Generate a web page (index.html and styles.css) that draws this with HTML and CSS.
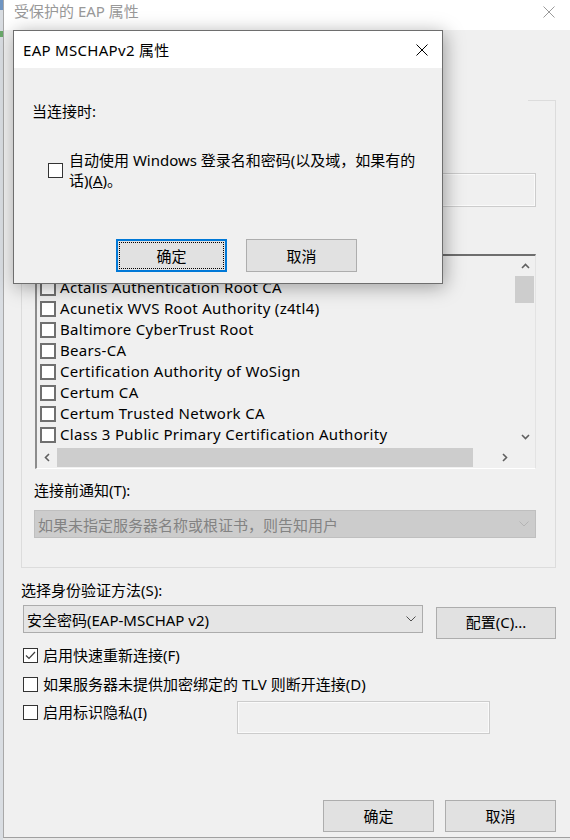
FILE: index.html
```html
<!DOCTYPE html>
<html lang="zh-CN">
  <head>
    <meta charset="UTF-8" />
    <title>受保护的 EAP 属性</title>
    <link rel="stylesheet" href="styles.css">
  </head>
  <body>
    <div class="desk">
      <!-- sliver of the desktop on the left -->
      <div class="edge">
        <div class="edge-blue"></div>
        <div class="edge-green"></div>
      </div>

      <!-- main window: 受保护的 EAP 属性 -->
      <div class="win">
        <div class="titlebar">
          <span class="title">受保护的 EAP 属性</span>
          <svg class="close" width="12" height="12" viewBox="0 0 12 12">
            <path d="M0.5 0.5L11.5 11.5M11.5 0.5L0.5 11.5" stroke="#9a9a9a" stroke-width="1" fill="none" />
          </svg>
        </div>

        <div class="content">
          <!-- the upper part of the group sits under the modal -->
          <div class="group">
            <div class="field servers"></div>

            <div class="list">
              <div class="list-main">
                <div class="rows">
                  <div class="item"><span class="ibox"></span></div>
                  <div class="item"><span class="ibox"></span>Actalis Authentication Root CA</div>
                  <div class="item"><span class="ibox"></span>Acunetix WVS Root Authority (z4tl4)</div>
                  <div class="item"><span class="ibox"></span>Baltimore CyberTrust Root</div>
                  <div class="item"><span class="ibox"></span>Bears-CA</div>
                  <div class="item"><span class="ibox"></span>Certification Authority of WoSign</div>
                  <div class="item"><span class="ibox"></span>Certum CA</div>
                  <div class="item"><span class="ibox"></span>Certum Trusted Network CA</div>
                  <div class="item"><span class="ibox"></span>Class 3 Public Primary Certification Authority</div>
                </div>
                <div class="vscroll">
                  <div class="sbtn">
                    <svg width="9" height="6" viewBox="0 0 9 6"><path d="M1 5L4.5 1.5L8 5" stroke="#606060" stroke-width="1.6" fill="none" /></svg>
                  </div>
                  <div class="vthumb"></div>
                  <div class="track"></div>
                  <div class="sbtn">
                    <svg width="9" height="6" viewBox="0 0 9 6"><path d="M1 1L4.5 4.5L8 1" stroke="#606060" stroke-width="1.6" fill="none" /></svg>
                  </div>
                </div>
              </div>
              <div class="list-foot">
                <div class="hscroll">
                  <div class="sbtn">
                    <svg width="6" height="9" viewBox="0 0 6 9"><path d="M5 1L1.5 4.5L5 8" stroke="#606060" stroke-width="1.6" fill="none" /></svg>
                  </div>
                  <div class="hthumb"></div>
                  <div class="track"></div>
                  <div class="sbtn">
                    <svg width="6" height="9" viewBox="0 0 6 9"><path d="M1 1L4.5 4.5L1 8" stroke="#606060" stroke-width="1.6" fill="none" /></svg>
                  </div>
                </div>
                <div class="corner"></div>
              </div>
            </div>

            <div class="label cap-t">连接前通知(T):</div>
            <div class="combo disabled">
              <span>如果未指定服务器名称或根证书，则告知用户</span>
              <svg width="10" height="6" viewBox="0 0 10 6"><path d="M0.5 0.5L5 5L9.5 0.5" stroke="#b4b4b4" stroke-width="1" fill="none" /></svg>
            </div>
          </div>

          <div class="label cap-s">选择身份验证方法(S):</div>
          <div class="method-row">
            <div class="combo method">
              <span>安全密码(EAP-MSCHAP v2)</span>
              <svg width="10" height="6" viewBox="0 0 10 6"><path d="M0.5 0.5L5 5L9.5 0.5" stroke="#505050" stroke-width="1" fill="none" /></svg>
            </div>
            <button class="btn config">配置(C)...</button>
          </div>

          <label class="check opt first">
            <span class="box">
              <svg width="13" height="13" viewBox="0 0 13 13"><path d="M2 6.5L5 9.5L11 3" stroke="#3c3c3c" stroke-width="1.2" fill="none" /></svg>
            </span>启用快速重新连接(F)
          </label>
          <label class="check opt"><span class="box"></span>如果服务器未提供加密绑定的 TLV 则断开连接(D)</label>
          <div class="privacy-row">
            <label class="check privacy"><span class="box"></span>启用标识隐私(I)</label>
            <div class="field identity"></div>
          </div>

          <div class="footer">
            <button class="btn">确定</button>
            <button class="btn">取消</button>
          </div>
        </div>
      </div>

      <!-- modal on top: EAP MSCHAPv2 属性 -->
      <div class="dialog">
        <div class="dlg-title">
          <span class="dlg-name">EAP MSCHAPv2 属性</span>
          <svg width="12" height="12" viewBox="0 0 12 12">
            <path d="M0.5 0.5L11.5 11.5M11.5 0.5L0.5 11.5" stroke="#000" stroke-width="1" fill="none" />
          </svg>
        </div>
        <div class="dlg-body">
          <div class="dlg-label">当连接时:</div>
          <label class="dlg-check">
            <span class="box"></span>
            <span class="dlg-text">自动使用 Windows 登录名和密码(以及域，如果有的<br>话)(<u>A</u>)。</span>
          </label>
          <div class="dlg-buttons">
            <button class="btn default">确定</button>
            <button class="btn">取消</button>
          </div>
        </div>
      </div>
    </div>
  </body>
</html>
```

FILE: styles.css
```css
/* General */
body {
  margin: 0;
  font-family: "Noto Sans", "Noto Sans CJK SC", sans-serif;
  font-size: 15px;
  color: #000;
  background: #f0f0f0;
}

.desk {
  position: relative;
  width: 570px;
  height: 840px;
  overflow: hidden;
  display: flex;
  background: #e8e8e8;
}

/* Desktop sliver */
.edge {
  width: 3px;
  background: #d9dde2;
}

.edge-blue {
  height: 10px;
  background: #6f95c2;
}

.edge-green {
  height: 6px;
  margin-top: 21px;
  background: #6aa86a;
}

/* Main window */
.win {
  flex: 1;
  height: 838px;
  box-sizing: border-box;
  border-left: 1px solid #a8a8a8;
  border-bottom: 1px solid #a0a0a0;
  background: #f0f0f0;
}

.titlebar {
  height: 30px;
  background: #fff;
  display: flex;
  align-items: center;
  justify-content: space-between;
  padding: 0 15px 0 10px;
}

.title {
  color: #999;
  line-height: 20px;
  margin-top: -8px;
}

.close {
  margin-top: -6px;
}

.content {
  padding: 70px 14px 0 17px;
}

.label {
  line-height: 20px;
  white-space: nowrap;
}

/* Group box: only the right end of its top rule is visible */
.group {
  border: 1px solid #dcdcdc;
  border-top: none;
  padding: 73px 19px 29px 12px;
  background: linear-gradient(#dcdcdc, #dcdcdc) right top / 28px 1px no-repeat;
  background-origin: border-box;
}

.check {
  display: flex;
  align-items: center;
  line-height: 20px;
  white-space: nowrap;
}

.box {
  width: 15px;
  height: 15px;
  box-sizing: border-box;
  border: 1px solid #333;
  background: #fff;
  margin-right: 5px;
  flex: none;
  display: flex;
  align-items: center;
  justify-content: center;
}

.field {
  box-sizing: border-box;
  border: 1px solid #cccccc;
  box-shadow: inset 0 0 0 1px #fafafa;
  background: #f0f0f0;
}

.servers {
  margin-left: 20px;
  height: 34px;
}

/* Certificate list */
.list {
  margin: 47px 0 0 1px;
  height: 215px;
  box-sizing: border-box;
  border-top: 2px solid #6e6e6e;
  border-left: 2px solid #8c8c8c;
  border-right: 1px solid #e3e3e3;
  border-bottom: 1px solid #ffffff;
  display: flex;
  flex-direction: column;
}

.list-main {
  height: 191px;
  display: flex;
}

.rows {
  flex: 1;
  overflow: hidden;
}

.item {
  height: 21px;
  line-height: 21px;
  display: flex;
  align-items: center;
  padding-left: 3px;
  white-space: nowrap;
  letter-spacing: 0.3px;
}

.ibox {
  width: 16px;
  height: 16px;
  box-sizing: border-box;
  border: 2px solid #707070;
  background: #fff;
  margin: 1px 4px 0 0;
  flex: none;
}

.vscroll {
  width: 20px;
  display: flex;
  flex-direction: column;
}

.sbtn {
  width: 20px;
  height: 20px;
  display: flex;
  align-items: center;
  justify-content: center;
  flex: none;
}

.vthumb {
  height: 27px;
  margin: 0 1px 0 0;
  background: #cdcdcd;
}

.track {
  flex: 1;
}

.list-foot {
  height: 21px;
  display: flex;
}

.hscroll {
  flex: 1;
  display: flex;
}

.hscroll .sbtn {
  height: 21px;
}

.hthumb {
  width: 416px;
  margin: 1px 0 1px 0;
  background: #cdcdcd;
}

.corner {
  width: 20px;
}

.cap-t {
  margin-top: 11px;
}

/* Combo boxes */
.combo {
  box-sizing: border-box;
  height: 28px;
  display: flex;
  align-items: center;
  justify-content: space-between;
  padding: 0 6px 0 3px;
  white-space: nowrap;
}

.combo.disabled {
  margin-top: 10px;
  background: #cccccc;
  border: 1px solid #bfbfbf;
  color: #838383;
}

.cap-s {
  margin-top: 12px;
}

.method-row {
  display: flex;
  align-items: flex-start;
  justify-content: space-between;
  margin-top: 5px;
}

.combo.method {
  width: 400px;
  margin-left: 2px;
  background: #e5e5e5;
  border: 1px solid #acacac;
}

/* Buttons */
.btn {
  font: inherit;
  color: #000;
  background: #e1e1e1;
  border: 1px solid #adadad;
  height: 32px;
  width: 111px;
  padding: 0;
  line-height: 20px;
}

.config {
  width: 120px;
  margin-top: 2px;
  padding-bottom: 2px;
}

.opt {
  margin: 9px 0 0 2px;
}

.opt.first {
  margin-top: 6px;
}

.privacy-row {
  display: flex;
  align-items: flex-start;
  margin-top: 7px;
}

.privacy {
  width: 214px;
  margin: 1px 0 0 2px;
}

.identity {
  width: 253px;
  height: 33px;
}

.footer {
  display: flex;
  justify-content: flex-end;
  gap: 11px;
  margin-top: 66px;
}

/* Modal dialog */
.dialog {
  position: absolute;
  left: 13px;
  top: 30px;
  width: 430px;
  height: 254px;
  box-sizing: border-box;
  border: 1px solid #6e6e6e;
  background: #f0f0f0;
  box-shadow: 2px 3px 18px rgba(0, 0, 0, 0.35);
}

.dlg-title {
  height: 37px;
  background: #fff;
  display: flex;
  align-items: center;
  justify-content: space-between;
  padding: 0 14px 0 9px;
}

.dlg-name {
  letter-spacing: 0.3px;
}

.dlg-body {
  padding-top: 33px;
}

.dlg-label {
  padding-left: 18px;
  line-height: 20px;
}

.dlg-check {
  display: flex;
  align-items: center;
  margin: 29px 0 0 34px;
  line-height: 20px;
}

.dlg-check .box {
  margin-right: 6px;
}

.dlg-text {
  white-space: nowrap;
}

.dlg-buttons {
  display: flex;
  justify-content: flex-end;
  gap: 19px;
  margin-top: 49px;
  padding-right: 85px;
}

.dlg-buttons .btn {
  width: 111px;
  height: 33px;
}

.btn.default {
  border: 2px solid #0078d7;
  outline: 1px dotted #000;
  outline-offset: -4px;
}
```
